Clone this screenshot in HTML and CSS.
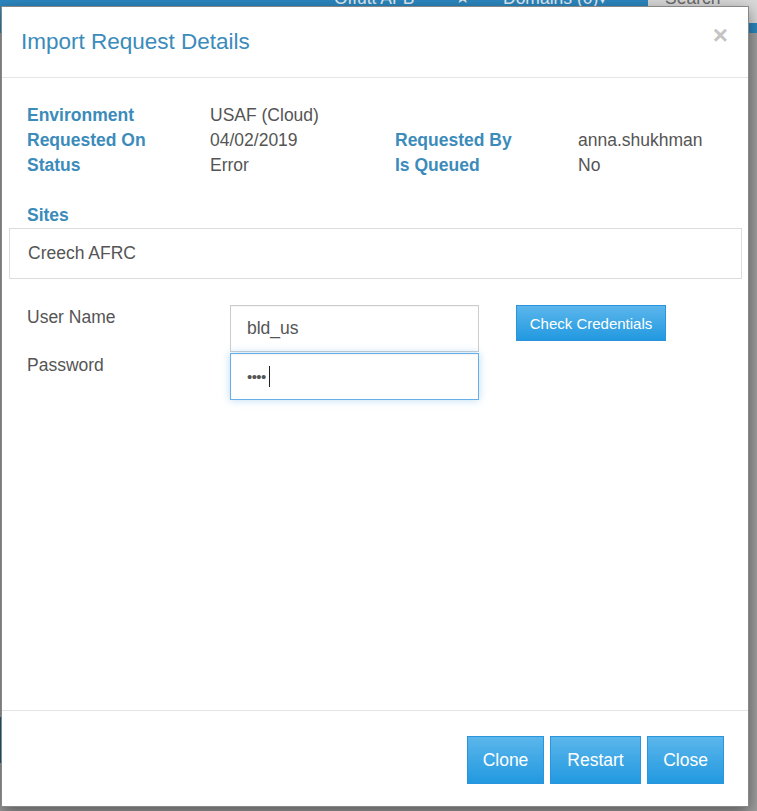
FILE: index.html
```html
<!DOCTYPE html>
<html lang="en">
<head>
<meta charset="utf-8">
<title>Import Request Details</title>
<link rel="stylesheet" href="styles.css">
</head>
<body>
  <header class="navbar">
    <div class="nav-items">
      <span class="nav-link site">Offutt AFB</span>
      <span class="nav-icon">&#9733;</span>
      <span class="nav-link domains">Domains (0)&#9662;</span>
      <div class="nav-search">Search</div>
    </div>
  </header>
  <main class="page-content">
    <div class="bg-btn"></div>
  </main>

  <div class="modal" role="dialog" aria-labelledby="modal-title">
    <div class="modal-header">
      <h4 class="modal-title" id="modal-title">Import Request Details</h4>
      <button class="close" type="button" aria-label="Close">&times;</button>
    </div>
    <div class="modal-body">
      <div class="details">
        <div class="lbl">Environment</div><div class="val">USAF (Cloud)</div><div></div><div></div>
        <div class="lbl">Requested On</div><div class="val">04/02/2019</div><div class="lbl">Requested By</div><div class="val">anna.shukhman</div>
        <div class="lbl">Status</div><div class="val">Error</div><div class="lbl">Is Queued</div><div class="val">No</div>
      </div>
      <div class="sites-title lbl">Sites</div>
      <div class="sites-box">Creech AFRC</div>
      <div class="cred-form">
        <label class="form-lbl" for="user">User Name</label>
        <input class="form-input" id="user" type="text" value="bld_us">
        <button class="btn btn-check" type="button">Check Credentials</button>
        <label class="form-lbl" for="pass">Password</label>
        <div class="form-input focused" id="pass" role="textbox"><span class="dots">&bull;&bull;&bull;&bull;</span><span class="caret"></span></div>
      </div>
    </div>
    <div class="modal-footer">
      <button class="btn btn-foot btn-narrow" type="button">Clone</button>
      <button class="btn btn-foot btn-wide" type="button">Restart</button>
      <button class="btn btn-foot btn-narrow" type="button">Close</button>
    </div>
  </div>
</body>
</html>
```
FILE: styles.css
```css
html, body {
  margin: 0;
  padding: 0;
}
body {
  width: 757px;
  height: 811px;
  overflow: hidden;
  position: relative;
  background: #9f9f9f;
  font-family: "Liberation Sans", Arial, sans-serif;
  font-size: 17.5px;
  color: #555;
}

/* background page */
.navbar {
  height: 33px;
  background: #2b87bf;
  overflow: hidden;
}
.nav-items {
  display: flex;
  align-items: flex-start;
  margin-top: -12px;
  line-height: 20px;
  color: #e3edf3;
  white-space: nowrap;
}
.nav-items > * {
  flex: none;
}
.site { margin-left: 334px; width: 121px; }
.nav-icon { width: 48px; font-size: 17px; color: #e8e8e8; }
.domains { width: 145px; }
.nav-search {
  width: 92px;
  height: 35px;
  padding-left: 17px;
  background: #d9d9d9;
  color: #6a6a6a;
}
.page-content {
  padding-top: 684px;
}
.bg-btn {
  width: 30px;
  height: 46px;
  background: #1c5f86;
}

/* modal */
.modal {
  position: absolute;
  left: 1px;
  top: 6px;
  width: 748px;
  height: 801px;
  box-sizing: border-box;
  background: #fff;
  border: 1px solid #878787;
  box-shadow: 0 5px 15px rgba(0, 0, 0, 0.45);
  display: flex;
  flex-direction: column;
}
.modal-header {
  padding: 19px;
  border-bottom: 1px solid #e5e5e5;
  display: flex;
  justify-content: space-between;
  align-items: flex-start;
}
.modal-title {
  margin: 0;
  font-size: 22.5px;
  font-weight: normal;
  line-height: 32px;
  color: #3b8bbb;
}
.close {
  border: 0;
  background: none;
  padding: 0;
  margin: -4px 1px 0 0;
  font-family: "Liberation Sans", Arial, sans-serif;
  font-size: 26px;
  font-weight: bold;
  line-height: 26px;
  color: #c4c4c4;
}
.modal-body {
  flex: 1;
  padding: 25px 6px 19px 7px;
}
.details {
  display: grid;
  grid-template-columns: 183px 185px 183px auto;
  padding-left: 18px;
  line-height: 25px;
}
.lbl {
  font-weight: bold;
  color: #3b8bbb;
}
.val {
  color: #555;
}
.sites-title {
  margin-top: 25px;
  padding-left: 18px;
  line-height: 25px;
}
.sites-box {
  border: 1px solid #dcdcdc;
  padding: 12px 18px;
  line-height: 25px;
  color: #555;
}
.cred-form {
  margin-top: 26px;
  padding-left: 18px;
  display: grid;
  grid-template-columns: 203px 249px auto;
  grid-auto-rows: auto;
  row-gap: 1px;
  align-items: start;
}
.form-lbl {
  line-height: 25px;
  color: #555;
}
.form-input {
  box-sizing: border-box;
  width: 249px;
  height: 47px;
  margin: 0;
  padding: 0 16px;
  border: 1px solid #cccccc;
  background: #fff;
  font-family: "Liberation Sans", Arial, sans-serif;
  font-size: 17.5px;
  color: #555;
  outline: none;
  box-shadow: inset 0 1px 1px rgba(0, 0, 0, 0.04);
}
.form-input.focused {
  border-color: #66afe9;
  box-shadow: inset 0 1px 1px rgba(0, 0, 0, 0.05), 0 0 8px rgba(102, 175, 233, 0.45);
  display: flex;
  align-items: center;
}
.dots {
  font-size: 15px;
  letter-spacing: -0.6px;
  color: #555;
  line-height: 1;
}
.caret {
  display: inline-block;
  width: 1px;
  height: 21px;
  margin-left: 3px;
  background: #222;
}
.btn {
  box-sizing: border-box;
  font-family: "Liberation Sans", Arial, sans-serif;
  color: #fff;
  border: 1px solid #2a95dc;
  background: linear-gradient(to bottom, #5bb6eb 0%, #2299e0 100%);
  cursor: pointer;
}
.btn-check {
  margin-left: 37px;
  width: 150px;
  height: 36px;
  padding: 0;
  font-size: 15px;
}
.modal-footer {
  border-top: 1px solid #e5e5e5;
  padding: 25px 24px 22px;
  display: flex;
  justify-content: flex-end;
  gap: 6px;
}
.btn-foot {
  height: 48px;
  padding: 0;
  font-size: 17.5px;
}
.btn-narrow { width: 77px; }
.btn-wide { width: 91px; }
```
